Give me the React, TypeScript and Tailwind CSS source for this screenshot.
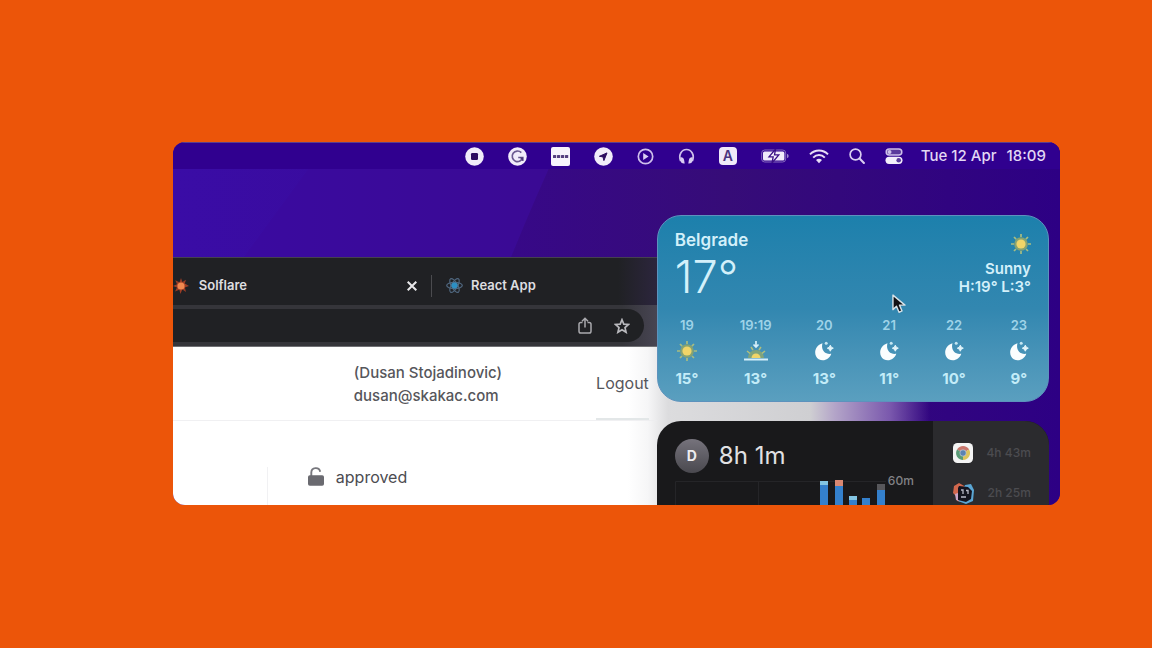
import type { ReactNode } from "react";

const FONT = "font-['Inter','Liberation_Sans',sans-serif]";

function Wallpaper() {
  return (
    <svg className="absolute inset-0 size-full" viewBox="0 0 887 363" preserveAspectRatio="none" aria-hidden="true">
      <defs>
        <linearGradient id="base" x1="0" x2="1" y1="0" y2="0">
          <stop offset="0" stopColor="#3a0ca6" />
          <stop offset="0.5" stopColor="#380a92" />
          <stop offset="0.75" stopColor="#370a80" />
          <stop offset="1" stopColor="#2d0084" />
        </linearGradient>
        <linearGradient id="band" x1="0" x2="1" y1="0" y2="0">
          <stop offset="0" stopColor="#3a0aa0" />
          <stop offset="1" stopColor="#3a0a93" />
        </linearGradient>
        <linearGradient id="edge" x1="0" x2="1" y1="0" y2="0">
          <stop offset="0" stopColor="#370888" />
          <stop offset="0.4" stopColor="#360c78" />
          <stop offset="1" stopColor="#2d0084" />
        </linearGradient>
      </defs>
      <rect width="887" height="363" fill="url(#base)" />
      <path d="M155 0 L60 130 L330 130 L390 0Z" fill="url(#band)" />
      <path d="M388 0 Q360 60 332 130 L332 363 L887 363 L887 0Z" fill="url(#edge)" />
    </svg>
  );
}

function StopIcon() {
  return (
    <svg width="19" height="19" viewBox="0 0 19 19" aria-hidden="true">
      <circle cx="9.500" cy="9.500" r="9.300" fill="#f1ecfa" />
      <rect x="6" y="6" width="7" height="7" rx="1.200" fill="#2c0a60" />
    </svg>
  );
}

function GrammarIcon() {
  return (
    <svg width="19" height="19" viewBox="0 0 19 19" fill="none" aria-hidden="true">
      <circle cx="9.500" cy="9.500" r="9.300" fill="#f1ecfa" />
      <path d="M13.300 5.600A5.300 5.300 0 1 0 14.700 10.500H10.200M14.700 10.500V14" stroke="#6a5990" strokeWidth="1.700" />
      <path d="M11.500 10.500h3.700v3.300z" fill="#4a3777" />
    </svg>
  );
}

function DotsIcon() {
  return (
    <svg width="19" height="19" viewBox="0 0 19 19" aria-hidden="true">
      <rect width="19" height="19" rx="2" fill="#f7f4fc" />
      <g fill="#55407f">
        <rect x="2" y="8" width="3.200" height="3" rx="0.600" />
        <rect x="6" y="8" width="3.200" height="3" rx="0.600" />
        <rect x="10" y="8" width="3.200" height="3" rx="0.600" />
        <rect x="14" y="8" width="3.200" height="3" rx="0.600" />
      </g>
    </svg>
  );
}

function LocationIcon() {
  return (
    <svg width="19" height="19" viewBox="0 0 19 19" aria-hidden="true">
      <circle cx="9.500" cy="9.500" r="9.300" fill="#f1ecfa" />
      <path d="M13 5.900 5.400 9.300l3.600.6.900 3.700z" fill="#2c0a60" stroke="#2c0a60" strokeLinejoin="round" />
    </svg>
  );
}

function PlayIcon() {
  return (
    <svg width="17" height="17" viewBox="0 0 17 17" fill="none" aria-hidden="true">
      <circle cx="8.500" cy="8.500" r="7.200" stroke="#cfbfec" strokeWidth="1.700" />
      <path d="M6.200 5v7l5.400-3.500z" fill="#dccff3" />
    </svg>
  );
}

function HeadphonesIcon() {
  return (
    <svg width="17" height="17" viewBox="0 0 17 17" fill="none" aria-hidden="true">
      <path d="M2.600 13C.2 7 3.500 1.500 8.500 1.500S16.800 7 14.400 13" stroke="#cdbfea" strokeWidth="1.700" />
      <path d="M2.300 9.300c2-.4 3.400.6 3.800 2.600l.6 3.600c-2.400.3-4-.7-4.400-3zM14.700 9.300c-2-.4-3.400.6-3.800 2.600l-.6 3.600c2.400.3 4-.7 4.400-3z" fill="#d9cdf1" />
    </svg>
  );
}

function BatteryIcon() {
  return (
    <svg width="28" height="14" viewBox="0 0 28 14" fill="none" aria-hidden="true">
      <rect x="0.700" y="1" width="24" height="12" rx="3" stroke="#8468bd" strokeWidth="1" />
      <rect x="2" y="2.500" width="21.400" height="9" rx="1.500" fill="#f1ebfa" />
      <path d="M26 5v4c1.300-.3 1.600-1.100 1.600-2S27.300 5.300 26 5z" fill="#9d86cc" />
      <path d="M14.600 0 8 7.900h4.200L11 14l6.800-8.200h-4.300z" fill="#f7f3fd" stroke="#3a0f85" strokeWidth="1.300" />
    </svg>
  );
}

function WifiIcon() {
  return (
    <svg width="20" height="15" viewBox="0 0 20 15" fill="none" stroke="#e6dcf6" strokeWidth="2" aria-hidden="true">
      <path d="M1 5.400C6 .2 14 .2 19 5.400" />
      <path d="M4.200 8.600c3.300-3.400 8.300-3.400 11.600 0" />
      <path d="m10 14.200-3-3.100c1.700-1.700 4.300-1.700 6 0z" fill="#e6dcf6" stroke="none" />
    </svg>
  );
}

function SearchIcon() {
  return (
    <svg width="16" height="16" viewBox="0 0 16 16" fill="none" stroke="#d9ccf0" strokeWidth="1.700" strokeLinecap="round" aria-hidden="true">
      <circle cx="6.500" cy="6.500" r="5.400" />
      <path d="m10.600 10.600 4.300 4.300" strokeWidth="2.100" />
    </svg>
  );
}

function ControlIcon() {
  return (
    <svg width="18" height="16" viewBox="0 0 18 16" fill="none" aria-hidden="true">
      <rect x="1.200" y="1" width="15.600" height="6" rx="3" fill="#5a3a9c" stroke="#cdbfe9" strokeWidth="1.500" />
      <circle cx="4.500" cy="4" r="2" fill="#cdbfe9" />
      <rect x="0.500" y="8.700" width="17" height="7.200" rx="3.600" fill="#f3eefb" />
      <circle cx="13.700" cy="12.300" r="2.300" fill="#5a3a9c" />
    </svg>
  );
}

function MenuBar() {
  return (
    <header className="relative flex h-[27px] items-center justify-end border-t border-[#5b3f8e] bg-[#30008f] pr-3.5 text-[#e2d8f4]">
      <div className="flex items-center gap-6">
        <StopIcon />
        <GrammarIcon />
        <DotsIcon />
        <LocationIcon />
        <PlayIcon />
        <HeadphonesIcon />
        <span className="flex h-[18px] w-[18px] items-center justify-center rounded-sm bg-[#efe9f9] text-sm font-semibold text-[#4b3480]">A</span>
        <BatteryIcon />
      </div>
      <div className="ml-5 flex items-center gap-5">
        <WifiIcon />
        <SearchIcon />
        <ControlIcon />
      </div>
      <time className="ml-[18px] flex gap-2.5 text-[15px] font-medium">
        <span>Tue 12 Apr</span>
        <span>18:09</span>
      </time>
    </header>
  );
}

function SolflareIcon() {
  return (
    <svg width="16" height="16" viewBox="0 0 16 16" aria-hidden="true">
      <path d="m8 0 1.400 4 3.600-2.200-1.200 3.700L16 8l-4.100 1.600L13 14l-3.700-2.400L7.400 16l-1-4.300L2 13.500l2-4L0 8l4-1.700L2.300 2.200l4.200 2z" fill="#9b3d25" />
      <circle cx="8" cy="8" r="3.600" fill="#f2884f" />
    </svg>
  );
}

function ReactIcon() {
  return (
    <svg width="17" height="17" viewBox="0 0 17 17" fill="none" aria-hidden="true">
      <g stroke="#506880" strokeWidth="1.200">
        <ellipse cx="8.500" cy="8.500" rx="7.800" ry="3.100" />
        <ellipse cx="8.500" cy="8.500" rx="7.800" ry="3.100" transform="rotate(60 8.500 8.500)" />
        <ellipse cx="8.500" cy="8.500" rx="7.800" ry="3.100" transform="rotate(120 8.500 8.500)" />
      </g>
      <circle cx="8.500" cy="8.500" r="3" fill="#2d8fc4" />
    </svg>
  );
}

function CloseIcon() {
  return (
    <svg width="10" height="10" viewBox="0 0 10 10" stroke="#e8e8ea" strokeWidth="2" aria-hidden="true">
      <path d="m0.700.7 8.600 8.600M9.300.7.7 9.300" />
    </svg>
  );
}

function ShareIcon() {
  return (
    <svg width="14" height="17" viewBox="0 0 14 17" fill="none" stroke="#a9a9ad" strokeWidth="1.500" aria-hidden="true">
      <path d="M4.500 5.500H2.800A1.800 1.800 0 0 0 1 7.300v6.900A1.800 1.800 0 0 0 2.800 16h8.400a1.800 1.800 0 0 0 1.800-1.800V7.300a1.800 1.800 0 0 0-1.800-1.800H9.500M7 10.500V1.500M4 4.300l3-3 3 3" />
    </svg>
  );
}

function StarIcon() {
  return (
    <svg width="16" height="16" viewBox="0 0 16 16" fill="none" stroke="#b9b9bd" strokeWidth="1.700" aria-hidden="true">
      <path d="m8 1.700 1.800 4.400 4.700.4L11 9.600l1.100 4.700L8 11.800l-4.100 2.500L5 9.600 1.500 6.500l4.700-.4z" />
    </svg>
  );
}

function UnlockIcon() {
  return (
    <svg width="16" height="19" viewBox="0 0 16 19" fill="none" aria-hidden="true">
      <path d="M3.300 9V5.500a4.500 4.500 0 0 1 8.900-.8" stroke="#77777d" strokeWidth="1.900" />
      <rect y="8.300" width="16" height="10.500" rx="1.800" fill="#6a6a70" />
    </svg>
  );
}

function BrowserWindow() {
  return (
    <section className="absolute top-[88px] right-[130px] bottom-0 left-0 flex flex-col" aria-label="Browser">
      <div className="flex h-[48px] shrink-0 items-center border-t border-[#45414f] bg-[linear-gradient(to_left,#2e2642_265px,#202124_312px)] pt-2 text-[13px] font-semibold text-[#dedee0]">
        <div className="flex items-center gap-2.5">
          <SolflareIcon />
          <span>Solflare</span>
        </div>
        <button type="button" aria-label="Close tab" className="ml-40">
          <CloseIcon />
        </button>
        <span className="ml-3.5 h-[22px] w-px bg-[#4b4b4f]" />
        <div className="ml-3.5 flex items-center gap-2">
          <ReactIcon />
          <span>React App</span>
        </div>
      </div>
      <div className="flex h-[42px] shrink-0 items-center border-b border-[#707074] bg-[linear-gradient(to_left,#4a4756_268px,#35353a_308px)] pr-[286px]">
        <div className="flex h-[33px] flex-1 items-center justify-end gap-[22px] rounded-r-full bg-[#202124] pr-3.5">
          <button type="button" aria-label="Share">
            <ShareIcon />
          </button>
          <button type="button" aria-label="Bookmark">
            <StarIcon />
          </button>
        </div>
      </div>
      <div className="flex flex-1 flex-col bg-[linear-gradient(to_left,#2d008000_0px,#7a58ad_40px,#b3a4c8_95px,#cfcfd2_120px,#dcdcde_262px,#f6f6f7_282px,#ffffff_302px)] text-[#56565b]">
        <div className="mr-[273px] flex h-[74px] items-center justify-between border-b border-[#ececef]/80 pr-2 pl-[181px]">
          <div className="text-[15px] leading-[23px] font-medium">
            <p>(Dusan Stojadinovic)</p>
            <p>dusan@skakac.com</p>
          </div>
          <button type="button" className="h-full border-b-2 border-[#e3e7e8] text-base">
            Logout
          </button>
        </div>
        <div className="flex flex-1 items-end">
          <div className="ml-[94px] flex h-[38px] items-start gap-3 border-l border-[#f1f1f3] pl-10 text-[#4c4c51]">
            <UnlockIcon />
            <span className="text-base leading-5">approved</span>
          </div>
        </div>
      </div>
    </section>
  );
}

function SunIcon() {
  return (
    <svg width="20" height="20" viewBox="0 0 20 20" aria-hidden="true">
      <path d="M10 0v20M0 10h20M3 3l14 14M17 3 3 17" stroke="#a9bd80" strokeWidth="1.700" strokeDasharray="3 14 3" />
      <circle cx="10" cy="10" r="6.800" fill="#87a372" />
      <circle cx="10" cy="10" r="4.600" fill="#f1d568" />
    </svg>
  );
}

function SunsetIcon() {
  return (
    <svg width="24" height="20" viewBox="0 0 24 20" fill="none" aria-hidden="true">
      <path d="M4 17a8 8 0 0 1 16 0z" fill="#80a47c" />
      <path d="m3 10 3 2.500M21 10l-3 2.500M7 6l2 3M17 6l-2 3" stroke="#b0bf7c" strokeWidth="1.500" />
      <path d="M7.500 17a4.500 4.500 0 1 1 9 0z" fill="#f1d568" />
      <path d="M0 18.500h24" stroke="#d5effa" strokeWidth="2" />
      <path d="M12 0v5M9.500 3.500 12 6l2.500-2.500" stroke="#d5effa" strokeWidth="1.700" />
    </svg>
  );
}

function MoonIcon() {
  return (
    <svg width="20" height="20" viewBox="0 0 20 20" aria-hidden="true">
      <path d="M8.500 2.200C6.700 8.500 10.500 13.800 17.300 12.800 15.500 18.300 9.500 21 4.700 18.200-1 14.500.2 4.600 8.500 2.200z" fill="#fafdfe" />
      <path d="m16.300 4.200 1 2 2 1-2 1-1 2-1-2-2-1 2-1z" fill="#e2f4fa" stroke="#e2f4fa" />
      <circle cx="12.200" cy="2.300" r="1.500" fill="#c4e5f1" />
    </svg>
  );
}

const HOURS: { time: string; temp: string; icon: ReactNode }[] = [
  { time: "19", temp: "15°", icon: <SunIcon /> },
  { time: "19:19", temp: "13°", icon: <SunsetIcon /> },
  { time: "20", temp: "13°", icon: <MoonIcon /> },
  { time: "21", temp: "11°", icon: <MoonIcon /> },
  { time: "22", temp: "10°", icon: <MoonIcon /> },
  { time: "23", temp: "9°", icon: <MoonIcon /> },
];

function WeatherWidget() {
  return (
    <section className="relative flex h-[187px] flex-col justify-between rounded-3xl border border-[#5d92bd] bg-linear-to-b from-[#1c80ac] via-[#3287b0] to-[#5a9fbf] px-[17px] pt-3 pb-3 text-[#d3f0fa]" aria-label="Weather">
      <div className="flex justify-between">
        <div>
          <h2 className="text-[17px] leading-6 font-semibold">Belgrade</h2>
          <p className="text-[45px] leading-[50px] font-light">17°</p>
        </div>
        <div className="flex flex-col items-end pt-1.5 text-[15px] leading-[18px] font-semibold">
          <SunIcon />
          <p className="mt-1.5">Sunny</p>
          <p>H:19° L:3°</p>
        </div>
      </div>
      <ul className="flex justify-between">
        {HOURS.map((hour) => (
          <li key={hour.time} className="flex min-w-6 flex-col items-center">
            <span className="text-[13px] leading-4 font-semibold text-[#9fd3e8]">{hour.time}</span>
            <span className="my-2">{hour.icon}</span>
            <span className="text-[15px] leading-5 font-bold text-[#c3ecf8]">{hour.temp}</span>
          </li>
        ))}
      </ul>
      <svg className="absolute top-[78px] left-[234px]" width="15" height="20" viewBox="0 0 16 21" aria-hidden="true">
        <path d="M1 1v15.500l3.800-3.600 2.700 6.400 3.200-1.400L8 11.700h5.800z" fill="#111114" stroke="#d6e2e8" strokeWidth="1.500" strokeLinejoin="round" />
      </svg>
    </section>
  );
}

function ChromeIcon() {
  return (
    <svg width="20" height="20" viewBox="0 0 20 20" aria-hidden="true">
      <rect width="20" height="20" rx="4.500" fill="#f4f4f4" />
      <path d="M10 10 4 6.500A7 7 0 0 1 16.100 6.500z" fill="#c9766c" />
      <path d="M10 10 4 6.500A7 7 0 0 0 10 17z" fill="#5a9a76" />
      <path d="M10 10 16.100 6.500A7 7 0 0 1 10 17z" fill="#ddc45c" />
      <circle cx="10" cy="10" r="3.400" fill="#b8c4d0" />
      <circle cx="10" cy="10" r="2.700" fill="#5b83b3" />
    </svg>
  );
}

function EditorIcon() {
  return (
    <svg width="22" height="21" viewBox="0 0 22 21" aria-hidden="true">
      <path d="m1 3 5-3 7 4-4 15-5-1-1-5-3-3z" fill="#d1674d" />
      <path d="m12 2 6-1 3 6-1 11-7 3-8-3z" fill="#5aa6d4" />
      <path d="m2 11 3-1 1 8-3-1z" fill="#c9a6c8" />
      <path d="m6 3 9 1 4 4-1 8-5 3-8-2V5z" fill="#141420" />
      <path d="M8 7h2v4M13 7.500h2V11M8 14h5" stroke="#b7b7c6" strokeWidth="1.300" fill="none" />
    </svg>
  );
}

function UsageChart() {
  return (
    <svg className="mt-1 shrink-0" width="211" height="26" viewBox="0 0 211 26" aria-hidden="true">
      <path d="M0.500 26V2.500H211M83.500 2v24" fill="none" stroke="#252528" />
      <path d="M145 2h8v24h-8zM160 6h8v20h-8zM174 20h8v6h-8zM187 19h8v7h-8zM202 11h8v15h-8z" fill="#3480cc" />
      <path d="M145 2h8v4h-8zM174 17h8v4h-8z" fill="#83c5e3" />
      <path d="M160 1h8v6h-8z" fill="#d98872" />
      <path d="M202 5h8v6h-8z" fill="#57575b" />
    </svg>
  );
}

function ScreenTimeWidget() {
  return (
    <section className="flex h-[84px] overflow-hidden rounded-t-3xl bg-[#19191b]" aria-label="Screen time">
      <div className="flex flex-1 flex-col pt-[18px] pl-[18px]">
        <div className="flex items-center gap-2.5">
          <span className="flex size-[34px] items-center justify-center rounded-full bg-linear-to-b from-[#76737c] to-[#4a494f] text-sm font-bold text-[#ededf0]">D</span>
          <span className="text-2xl text-[#e1e1e3]">8h 1m</span>
        </div>
        <div className="mt-0.5 flex items-start gap-0.5">
          <UsageChart />
          <span className="text-xs leading-3 font-medium text-[#828286]">60m</span>
        </div>
      </div>
      <ul className="w-[116px] bg-[#2b2b2e] pt-3 pr-[18px] pl-5 text-xs font-medium text-[#4c4c50]">
        <li className="flex h-10 items-start justify-between leading-10">
          <span className="flex h-10 items-center"><ChromeIcon /></span>
          <span>4h 43m</span>
        </li>
        <li className="flex h-10 items-start justify-between leading-10">
          <span className="flex h-10 items-center"><EditorIcon /></span>
          <span>2h 25m</span>
        </li>
      </ul>
    </section>
  );
}

export default function App() {
  return (
    <div className={`min-h-screen bg-[#ec5509] pt-[142px] pr-[8%] pb-[143px] pl-[15%] ${FONT}`}>
      <main className="relative overflow-hidden rounded-xl">
        <Wallpaper />
        <MenuBar />
        <div className="relative">
          <BrowserWindow />
          <div className="relative ml-auto flex w-[403px] flex-col gap-[19px] pt-[46px] pr-[11px]">
            <WeatherWidget />
            <ScreenTimeWidget />
          </div>
        </div>
      </main>
    </div>
  );
}
